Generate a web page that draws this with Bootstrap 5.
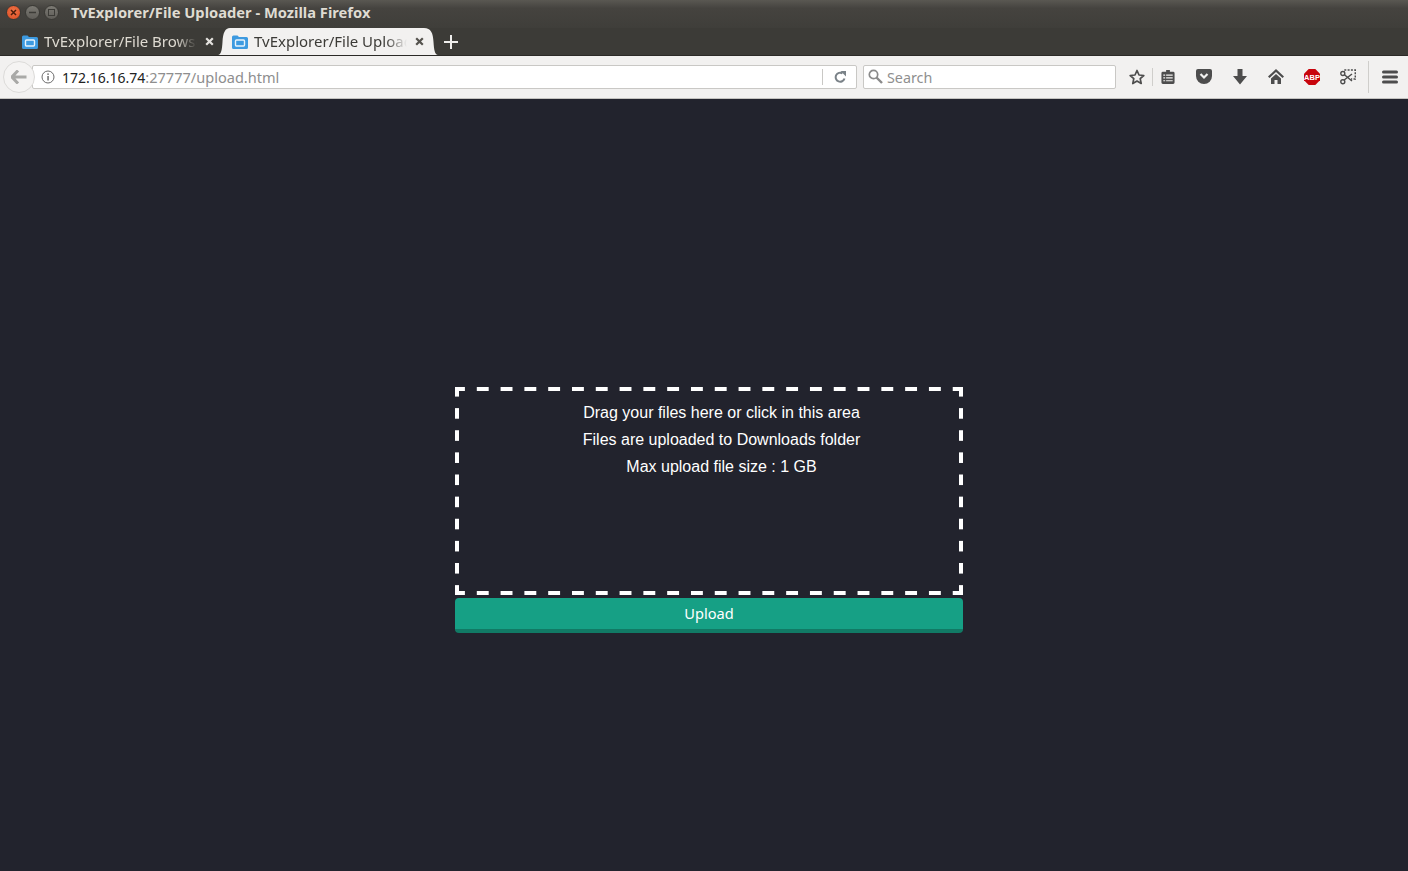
<!DOCTYPE html>
<html lang="en">
<head>
<meta charset="utf-8">
<title>TvExplorer/File Uploader</title>
<link href="https://cdn.jsdelivr.net/npm/bootstrap@5.3.0/dist/css/bootstrap.min.css" rel="stylesheet">
<style>
html,body{height:100%;overflow:hidden}
body{background:#22232d;font-family:"Liberation Sans",Arial,sans-serif}
.ui-font{font-family:"Noto Sans","Open Sans",sans-serif}
.title-bar{height:28px;background:linear-gradient(#5a5852,#45433f 30%,#3f3e3a);padding:0 0 3px 6px}
.win-btn{width:15px;height:15px;border-radius:50%;margin-right:4px;background:linear-gradient(#7b7973,#5f5d58);border:1px solid #3a3935;flex:none}
.win-btn.closer{background:radial-gradient(circle at 50% 40%,#f0764a,#d9491f)}
.win-title{margin-left:8px;color:#dfdbd2;font-weight:700;font-size:14.7px;line-height:1}
.tab-strip{height:27px;background:#3c3b37;padding-left:12px;color:#dfdbd2}
.tab-item{height:27px;width:206px;padding:0 4px 0 10px;font-size:15px;flex:none}
.tab-active{background:#f2f1f0;color:#3c3b37;width:194px;padding:0 0 0 2px}
.tab-curve{flex:none;display:block}
.tab-label{margin-left:6px;width:153px;overflow:hidden;white-space:nowrap;-webkit-mask-image:linear-gradient(90deg,#000 132px,transparent 153px);mask-image:linear-gradient(90deg,#000 132px,transparent 153px)}
.tab-x{margin-left:auto;flex:none}
.tab-icon{flex:none}
.new-tab{margin-left:6px}
.nav-row{height:44px;background:#f2f1f0;border-top:1px solid #2b2a27;border-bottom:1px solid #c4c3c0;padding-left:3px;padding-bottom:1px}
.back-btn{width:32px;height:32px;border-radius:50%;background:#f5f4f3;border:1px solid #dcdbd9;z-index:1;flex:none}
.url-box{height:24px;background:#fff;border:1px solid #c9c8c5;border-radius:2px;margin-left:-3px;padding-left:8px;padding-right:10px;font-size:14px;min-width:0;flex:1 1 0}
.url-host{color:#222;margin-left:7px;padding-top:2px}
.url-path{color:#8e8e8e;font-size:14.55px}
.url-div{width:1px;height:16px;background:#c9c8c5;margin-left:auto;margin-right:11px}
.search-box{width:253px;height:24px;background:#fff;border:1px solid #c9c8c5;border-radius:2px;margin-left:6px;padding-left:4px;color:#8f8f8f;font-size:14.33px;flex:none}
.search-word{margin-left:4px;padding-top:2px}
.tool-strip{margin-left:6px;flex:none}
.tool-slot{width:36px;height:24px;flex:none}
.tool-first{width:30px}
.tool-gap{margin-right:3px}
.tool-sep{width:1px;height:18px;background:#cfcecb;flex:none}
.tool-sep-tall{height:32px;margin-left:2px;margin-right:3px}
.page-main{padding:288px 0 0 455px;flex:1 1 auto}
.upload-form{width:508px}
.drop-zone{height:208px;padding:12px 0 0 25px;color:#fff;font-size:16px;line-height:27px;text-align:center;
background:
linear-gradient(90deg,#fff 12px,transparent 12px) -2px 0/23.81px 4px repeat-x,
linear-gradient(90deg,#fff 12px,transparent 12px) -2px 100%/23.81px 4px repeat-x,
linear-gradient(#fff 11px,transparent 11px) 0 -1px/4px 22.125px repeat-y,
linear-gradient(#fff 11px,transparent 11px) 100% -1px/4px 22.125px repeat-y}
.upload-btn{display:block;width:100%;height:35px;margin-top:3px;padding:0;background:#16a085;border:0;border-bottom:4px solid #117a65;border-radius:4px;color:#fff;font-size:14.6px;line-height:1}
</style>
</head>
<body class="d-flex flex-column">
<header class="ui-font">
  <div class="title-bar d-flex align-items-center">
    <span class="win-btn closer d-flex align-items-center justify-content-center"><svg width="7" height="7" viewBox="0 0 7 7"><path d="M1 1l5 5M6 1 1 6" stroke="#4b1d0c" stroke-width="1.500"/></svg></span>
    <span class="win-btn d-flex align-items-center justify-content-center"><svg width="7" height="7" viewBox="0 0 7 7"><path d="M0 3.500h7" stroke="#3c3b37" stroke-width="1.500"/></svg></span>
    <span class="win-btn d-flex align-items-center justify-content-center"><svg width="7" height="7" viewBox="0 0 7 7"><rect x="0.500" y="0.500" width="6" height="6" fill="none" stroke="#3c3b37"/></svg></span>
    <span class="win-title">TvExplorer/File Uploader - Mozilla Firefox</span>
  </div>
  <div class="tab-strip d-flex">
    <div class="tab-item d-flex align-items-center">
      <svg class="tab-icon" width="16" height="15" viewBox="0 0 16 15"><path d="M0 3a1.500 1.500 0 0 1 1.500-1.500h4l1.500 1.500h7.500A1.500 1.500 0 0 1 16 4.500v9A1.500 1.500 0 0 1 14.500 15h-13A1.500 1.500 0 0 1 0 13.500z" fill="#3d9ae0"/><rect x="3.500" y="6" width="9" height="6" rx="1" fill="none" stroke="#e8f3fb" stroke-width="1.400"/></svg>
      <span class="tab-label">TvExplorer/File Browser</span>
      <svg class="tab-x" width="9" height="9" viewBox="0 0 9 9"><path d="M1.200 1.200l6.600 6.600M7.800 1.200 1.200 7.800" stroke="#e4e2de" stroke-width="2.200"/></svg>
    </div>
    <svg class="tab-curve" width="12" height="27" viewBox="0 0 12 27"><path d="M0 27C3 27 4 22 4.500 14 5 5 7 0 12 0V27z" fill="#f2f1f0"/></svg>
    <div class="tab-item tab-active d-flex align-items-center">
      <svg class="tab-icon" width="16" height="15" viewBox="0 0 16 15"><path d="M0 3a1.500 1.500 0 0 1 1.500-1.500h4l1.500 1.500h7.500A1.500 1.500 0 0 1 16 4.500v9A1.500 1.500 0 0 1 14.500 15h-13A1.500 1.500 0 0 1 0 13.500z" fill="#3d9ae0"/><rect x="3.500" y="6" width="9" height="6" rx="1" fill="none" stroke="#e8f3fb" stroke-width="1.400"/></svg>
      <span class="tab-label">TvExplorer/File Uploader</span>
      <svg class="tab-x" width="9" height="9" viewBox="0 0 9 9"><path d="M1.200 1.200l6.600 6.600M7.800 1.200 1.200 7.800" stroke="#55534e" stroke-width="2.200"/></svg>
    </div>
    <svg class="tab-curve" width="14" height="27" viewBox="0 0 14 27"><path d="M14 27C11 27 10 22 9.500 14 9 5 7 0 0 0V27z" fill="#f2f1f0"/></svg>
    <div class="new-tab d-flex align-items-center">
      <svg width="14" height="14" viewBox="0 0 14 14"><path d="M7 0v14M0 7h14" stroke="#efeeec" stroke-width="2"/></svg>
    </div>
  </div>
  <nav class="nav-row d-flex align-items-center">
    <div class="back-btn d-flex align-items-center justify-content-center">
      <svg width="16" height="14" viewBox="0 0 16 14"><path d="M7 0.500 1 7l6 6.500M1.500 7H15.500" fill="none" stroke="#a9a9a7" stroke-width="3"/></svg>
    </div>
    <div class="url-box d-flex align-items-center">
      <svg width="14" height="14" viewBox="0 0 14 14"><circle cx="7" cy="7" r="6" fill="none" stroke="#6b6b6b"/><rect x="6.300" y="6" width="1.500" height="4.500" fill="#6b6b6b"/><rect x="6.300" y="3.400" width="1.500" height="1.500" fill="#6b6b6b"/></svg>
      <span class="url-host">172.16.16.74<span class="url-path">:27777/upload.html</span></span>
      <span class="url-div"></span>
      <svg width="12" height="12" viewBox="0 0 12 12"><path d="M10.500 7.500A4.500 4.500 0 1 1 8.500 2.300" fill="none" stroke="#7a8288" stroke-width="2"/><path d="M6.500 0h5.500v5.500z" fill="#7a8288"/></svg>
    </div>
    <div class="search-box d-flex align-items-center">
      <svg width="15" height="15" viewBox="0 0 15 15"><circle cx="5.500" cy="5.500" r="4.200" fill="none" stroke="#8a8a8a" stroke-width="1.700"/><path d="M8.500 8.500 14 14" stroke="#8a8a8a" stroke-width="2.400"/></svg>
      <span class="search-word">Search</span>
    </div>
    <div class="tool-strip d-flex align-items-center">
      <div class="tool-slot tool-first d-flex align-items-center justify-content-center">
        <svg width="16" height="16" viewBox="0 0 16 16"><path d="M8 1.500 10 6l4.800.5-3.600 3.200 1 4.800L8 12.100 3.800 14.500l1-4.800L1.200 6.500 6 6z" fill="none" stroke="#4d4d4d" stroke-width="1.700" stroke-linejoin="round"/></svg>
      </div>
      <span class="tool-sep"></span>
      <div class="tool-slot tool-first tool-gap d-flex align-items-center justify-content-center">
        <svg width="14" height="15" viewBox="0 0 14 16"><path d="M1.500 3H5V1h4V3h3.500A1.500 1.500 0 0 1 14 4.500v10a1.500 1.500 0 0 1-1.500 1.500h-11A1.500 1.500 0 0 1 0 14.500v-10A1.500 1.500 0 0 1 1.500 3z" fill="#4d4d4d"/><path d="M2 6.500h2M5 6.500h7M2 9.500h2M5 9.500h7M2 12.500h2M5 12.500h7" stroke="#f2f1f0" stroke-width="1.200"/></svg>
      </div>
      <div class="tool-slot d-flex align-items-center justify-content-center">
        <svg width="16" height="15" viewBox="0 0 16 15"><path d="M2 0h12a2 2 0 0 1 2 2v5A8 8 0 0 1 0 7V2a2 2 0 0 1 2-2z" fill="#4d4d4d"/><path d="M4.500 5 8 8.500 11.500 5" fill="none" stroke="#f2f1f0" stroke-width="2.200"/></svg>
      </div>
      <div class="tool-slot d-flex align-items-center justify-content-center">
        <svg width="14" height="16" viewBox="0 0 14 16"><path d="M4.500 0h5v7H14l-7 8.500L0 7h4.500z" fill="#4d4d4d"/></svg>
      </div>
      <div class="tool-slot d-flex align-items-center justify-content-center">
        <svg width="16" height="15" viewBox="0 0 16 15"><path d="M8 0 16 7.500 14.500 9 8 3 1.500 9 0 7.500zM3 9.500 8 5l5 4.500V15H9.500v-4h-3v4H3z" fill="#4d4d4d"/></svg>
      </div>
      <div class="tool-slot d-flex align-items-center justify-content-center">
        <svg width="16" height="16" viewBox="0 0 16 16"><path d="M4.700 0h6.600L16 4.700v6.600L11.300 16H4.700L0 11.300V4.700z" fill="#c8040c"/><text x="8" y="10.700" text-anchor="middle" font-family="Liberation Sans,sans-serif" font-size="7.500" font-weight="700" fill="#fff">ABP</text></svg>
      </div>
      <div class="tool-slot d-flex align-items-center justify-content-center">
        <svg width="16" height="16" viewBox="0 0 16 16"><path d="M4 4V1h11.300v9H11" fill="none" stroke="#4d4d4d" stroke-width="1.500" stroke-dasharray="2 1.300"/><path d="M3.500 5 12 12M3.500 11.500 12 5" stroke="#4d4d4d" stroke-width="1.500"/><circle cx="2.800" cy="4.500" r="2" fill="#f2f1f0" stroke="#4d4d4d" stroke-width="1.400"/><circle cx="2.800" cy="12.800" r="2" fill="#f2f1f0" stroke="#4d4d4d" stroke-width="1.400"/></svg>
      </div>
      <span class="tool-sep tool-sep-tall"></span>
      <div class="tool-slot d-flex align-items-center justify-content-center">
        <svg width="16" height="14" viewBox="0 0 16 14"><path d="M1.500 2h13M1.500 7h13M1.500 12h13" stroke="#4d4d4d" stroke-width="3" stroke-linecap="round"/></svg>
      </div>
    </div>
  </nav>
</header>
<main class="page-main">
  <form class="upload-form">
    <div class="drop-zone">
      Drag your files here or click in this area<br>
      Files are uploaded to Downloads folder<br>
      Max upload file size : 1 GB
    </div>
    <button type="button" class="upload-btn ui-font">Upload</button>
  </form>
</main>
<script src="https://cdn.jsdelivr.net/npm/bootstrap@5.3.0/dist/js/bootstrap.bundle.min.js"></script>
</body>
</html>
